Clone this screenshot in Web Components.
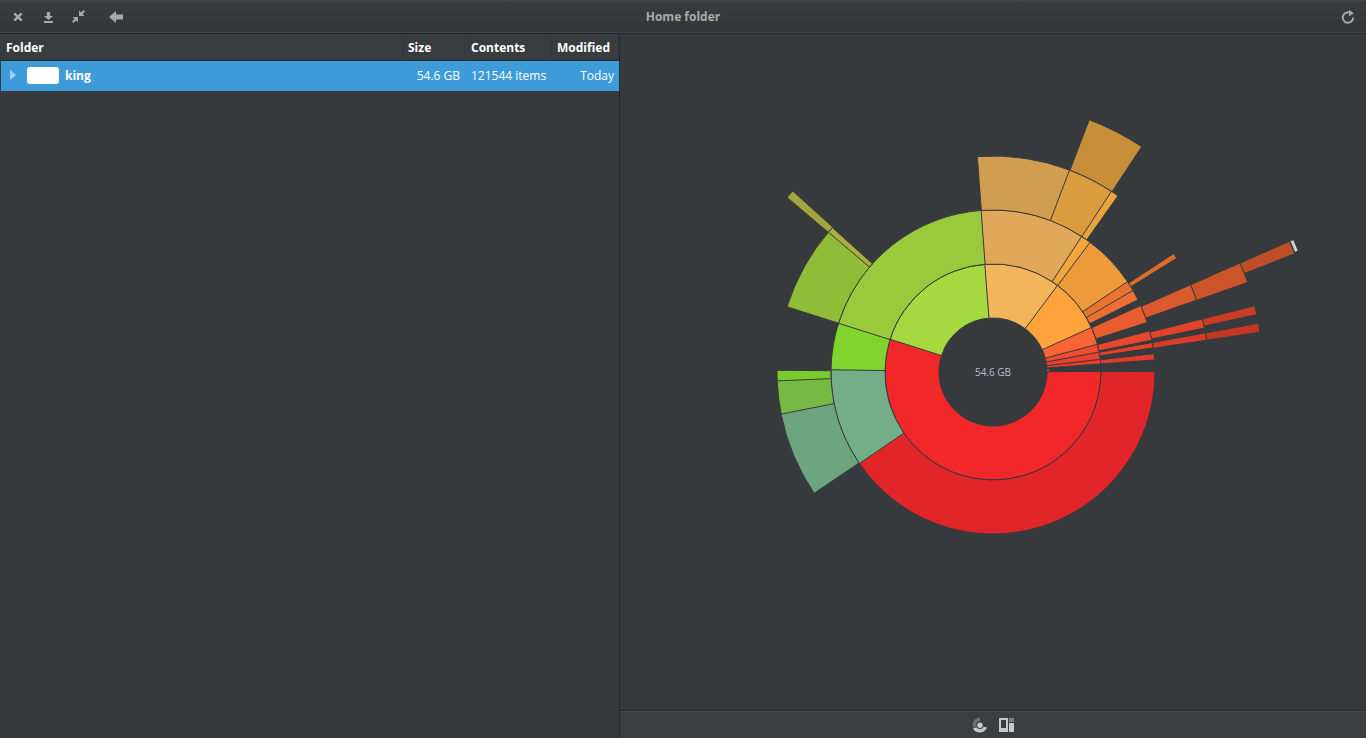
<!DOCTYPE html>
<html>
<head>
<meta charset="utf-8">
<title>Home folder</title>
<style>
  html, body { margin: 0; height: 100%; background: #363a3d; }
  body { font-family: "Open Sans", sans-serif; font-size: 13px; overflow: hidden; }
</style>
</head>
<body>
<app-window>
  <title-bar slot="top" heading="Home folder"></title-bar>
  <folder-tree slot="left"></folder-tree>
  <ring-chart slot="right" total="54.6 GB"></ring-chart>
  <view-switch slot="bottom"></view-switch>
</app-window>

<script>
// APP WINDOW
class AppWindow extends HTMLElement {
    constructor() {
        super();
        this.attachShadow({ mode: "open" });
        this.shadowRoot.innerHTML = `
            <style>
                :host {
                    display: grid;
                    grid-template-columns: 620px 1fr;
                    grid-template-rows: 34px 1fr 28px;
                    height: 738px;
                    background: #363a3d;
                }
                .top { grid-column: 1 / 3; }
                .left { grid-row: 2 / 4; border-right: 1px solid #272a2c; min-width: 0; }
                .right { min-width: 0; }
            </style>
            <div class="top"><slot name="top"></slot></div>
            <div class="left"><slot name="left"></slot></div>
            <div class="right"><slot name="right"></slot></div>
            <div class="bottom"><slot name="bottom"></slot></div>
        `;
    }
}
customElements.define("app-window", AppWindow);

// TITLE BAR
class TitleBar extends HTMLElement {
    constructor() {
        super();
        this.attachShadow({ mode: "open" });
        this.shadowRoot.innerHTML = `
            <style>
                :host {
                    display: grid;
                    grid-template-columns: 1fr auto 1fr;
                    align-items: center;
                    height: 34px;
                    box-sizing: border-box;
                    background: linear-gradient(#42474a, #373b3e 3px, #33373a);
                    border-bottom: 1px solid #26292b;
                    box-shadow: inset 0 -1px 0 #3f4447;
                    color: #aaaaa6;
                }
                svg { display: block; fill: #a6a9aa; }
                .btn { width: 30px; height: 33px; display: flex; align-items: center; justify-content: center; flex: none; }
                .tools { display: flex; padding-left: 3px; }
                .back { margin-left: 8px; }
                h1 { margin: 0; font-size: 12px; font-weight: 700; }
                .refresh { width: 36px; justify-self: end; }
            </style>
            <div class="tools">
                <div class="btn"><svg width="10" height="10" viewBox="0 0 10 10"><path d="M2.200 .4 5 3.200 7.800 .4 9.600 2.200 6.800 5l2.800 2.800-1.800 1.800L5 6.800 2.200 9.600 .4 7.800 3.200 5 .4 2.200z"/></svg></div>
                <div class="btn"><svg width="11" height="12" viewBox="0 0 11 12"><path d="M3.800 1h3.400v4H10L5.500 9 1 5h2.800zM1 10h9v2H1z"/></svg></div>
                <div class="btn"><svg width="13" height="13" viewBox="0 0 13 13"><path d="M11.500 0 13 1.500 10.500 4l2 2H7V.5l2 2zM1.500 13 0 11.500 2.500 9l-2-2H6v5.500l-2-2z"/></svg></div>
                <div class="btn back"><svg width="14" height="12" viewBox="0 0 14 12"><path d="M0 6 7 0v3.500h7v5H7V12z"/></svg></div>
            </div>
            <h1></h1>
            <div class="btn refresh"><svg width="14" height="14" viewBox="0 0 14 14"><path fill="none" stroke="#a6a9aa" stroke-width="2" d="M9.800 3.200A5.200 5.200 0 1 0 12.200 7.500"/><path d="M8 0l5 3.300-5 3z"/></svg></div>
        `;
        this.shadowRoot.querySelector("h1").textContent = this.getAttribute("heading");
    }
}
customElements.define("title-bar", TitleBar);

// FOLDER TREE
class FolderTree extends HTMLElement {
    constructor() {
        super();
        this.attachShadow({ mode: "open" });
        this.shadowRoot.innerHTML = `
            <style>
                :host { display: block; color: #fff; font-size: 12px; }
                .cols { display: grid; grid-template-columns: 404px 61px 86px 68px; }
                .head { height: 27px; box-sizing: border-box; border-bottom: 1px solid #2b2e30; background: #383c3f; }
                .head div {
                    display: flex;
                    align-items: center;
                    padding-left: 6px;
                    font-weight: 700;
                    border-right: 1px solid #33373a;
                }
                .head div + div { padding-left: 4px; }
                .head div:nth-child(3), .head div:nth-child(4) { padding-left: 6px; }
                .row {
                    height: 30px;
                    box-sizing: border-box;
                    padding-bottom: 2px;
                    margin-left: 1px;
                    background: #3d9bda;
                    grid-template-columns: 403px 61px 86px 68px;
                    align-items: center;
                }
                .name { display: flex; align-items: center; font-weight: 700; padding-left: 9px; }
                .arrow { width: 0; height: 0; border-left: 6px solid #a5cdea; border-top: 5px solid transparent; border-bottom: 5px solid transparent; }
                .icon { width: 32px; height: 17px; background: #fff; border-radius: 3px; margin: 0 6px 0 11px; }
                .size { text-align: right; padding-right: 5px; }
                .contents { padding-left: 6px; }
                .date { text-align: right; padding-right: 5px; }
            </style>
            <div class="cols head">
                <div>Folder</div><div>Size</div><div>Contents</div><div>Modified</div>
            </div>
            <div class="cols row">
                <div class="name"><span class="arrow"></span><span class="icon"></span>king</div>
                <div class="size">54.6 GB</div>
                <div class="contents">121544 items</div>
                <div class="date">Today</div>
            </div>
        `;
    }
}
customElements.define("folder-tree", FolderTree);

// RING CHART
// [ring, from, to, colour] angles in degrees, counter clockwise from east
const SEGMENTS = [
    [1, 162, 360, "#f12729"], [1, 94, 162, "#a5d93f"], [1, 53, 94, "#f2b55c"], [1, 24, 53, "#ffa33a"],
    [1, 14.5, 24, "#fb6434"], [1, 10.3, 14.5, "#ee4c2e"], [1, 6.4, 10.3, "#ea402c"], [1, 4.6, 6.4, "#e93a2a"],
    [2, 214.2, 360, "#e12528"], [2, 179, 214.2, "#74ae88"], [2, 162.3, 179, "#81d42d"], [2, 94, 162.3, "#9aca3c"],
    [2, 56.6, 94, "#e0a858"], [2, 53, 56.6, "#f0a63c"], [2, 33.7, 53, "#ed9a3a"], [2, 30, 33.7, "#e8722f"],
    [2, 26.7, 30, "#ea6f30"], [2, 18, 24, "#e85c2d"], [2, 11.5, 14.5, "#e8472c"], [2, 8.8, 10.3, "#e5402b"],
    [2, 4.5, 6.3, "#e33a2a"],
    [3, 69.1, 94, "#d19e51"], [3, 56.6, 69.1, "#da9c3d"], [3, 54.8, 56.6, "#e8a53c"], [3, 31.9, 33.1, "#e0692d"],
    [3, 19.6, 23.7, "#db5a2b"], [3, 11.9, 14.1, "#df4328"], [3, 8.6, 10.3, "#d93b28"],
    [3, 139.5, 162.3, "#90bc38"], [3, 138.2, 139.5, "#a9ae40"], [3, 179.7, 182.5, "#7ccb2c"],
    [3, 182.5, 191.4, "#76b944"], [3, 191.4, 214, "#6ca57e"],
    [4, 56.7, 69, "#c98f38"], [4, 19.5, 23.7, "#cc5429"], [4, 12.4, 14.1, "#cb3c24"], [4, 8.6, 10.3, "#c53624"],
    [4, 138, 139.6, "#a0a53e"],
    [5, 21.5, 23.7, "#bd4e27"]
];

class RingChart extends HTMLElement {
    constructor() {
        super();
        this.attachShadow({ mode: "open" });
        const cx = 373, cy = 338, step = 54;
        const point = (r, a) => {
            const rad = a * Math.PI / 180;
            return (cx + r * Math.cos(rad)).toFixed(2) + " " + (cy - r * Math.sin(rad)).toFixed(2);
        };
        const sector = (r0, r1, from, to) => {
            const big = to - from > 180 ? 1 : 0;
            return `M${point(r0, from)}L${point(r1, from)}A${r1} ${r1} 0 ${big} 0 ${point(r1, to)}L${point(r0, to)}A${r0} ${r0} 0 ${big} 1 ${point(r0, from)}Z`;
        };
        // the 1px stroke eats half a pixel of each edge, so grow the sector to keep slivers wide
        const paths = SEGMENTS.map(([ring, from, to, colour]) => {
            const r0 = ring * step, r1 = r0 + step;
            const pad = 0.5 / (r0 + step / 2) * 180 / Math.PI;
            return `<path d="${sector(r0, r1, from - pad, to + pad)}" fill="${colour}"/>`;
        }).join("");
        this.shadowRoot.innerHTML = `
            <style>
                :host { display: block; height: 676px; }
                svg { display: block; width: 100%; height: 100%; }
                path { stroke: #363a3d; stroke-width: 1; }
                text { font-family: "Open Sans", sans-serif; font-size: 10px; fill: #b9bfd0; }
            </style>
            <svg viewBox="0 0 746 676">
                ${paths}
                <path d="${sector(325, 328, 21.7, 23.7)}" fill="#cdd3d4" style="stroke:none"/>
                <path d="${sector(54, 56, 1.2, 2.2)}" fill="#8f979c" style="stroke:none"/>
                <text x="${cx}" y="${cy + 4}" text-anchor="middle">${this.getAttribute("total")}</text>
            </svg>
        `;
    }
}
customElements.define("ring-chart", RingChart);

// VIEW SWITCH
class ViewSwitch extends HTMLElement {
    constructor() {
        super();
        this.attachShadow({ mode: "open" });
        this.shadowRoot.innerHTML = `
            <style>
                :host {
                    display: flex;
                    align-items: center;
                    justify-content: center;
                    gap: 11px;
                    height: 28px;
                    box-sizing: border-box;
                    background: #3a3e41;
                    border-top: 1px solid #292c2e;
                    box-shadow: inset 0 1px 0 #44494c;
                }
                svg { display: block; }
            </style>
            <svg width="16" height="16" viewBox="0 0 16 16">
                <path fill="#6b7073" d="M8 .500A7.500 7.500 0 0 0 1 10.500l3.500-1A4 4 0 0 1 8 4z"/>
                <path fill="#c5c9c9" d="M1 11.500c1 2.600 3.800 4 7 4s5.500-1.800 7-5l-3.300-.800C10.800 11.300 9.500 12 8 12s-2.900-.4-3.700-1.700z"/>
                <circle cx="8" cy="8.300" r="2.700" fill="#c5c9c9"/>
            </svg>
            <svg width="15" height="14" viewBox="0 0 15 14">
                <path fill="#c5c9c9" d="M0 0h9v14H0zM2 2v8h5V2z"/>
                <path fill="#c5c9c9" d="M10 5h5v9h-5z"/>
                <path fill="#7c8184" d="M10 0h5v4h-5z"/>
            </svg>
        `;
    }
}
customElements.define("view-switch", ViewSwitch);
</script>
</body>
</html>
